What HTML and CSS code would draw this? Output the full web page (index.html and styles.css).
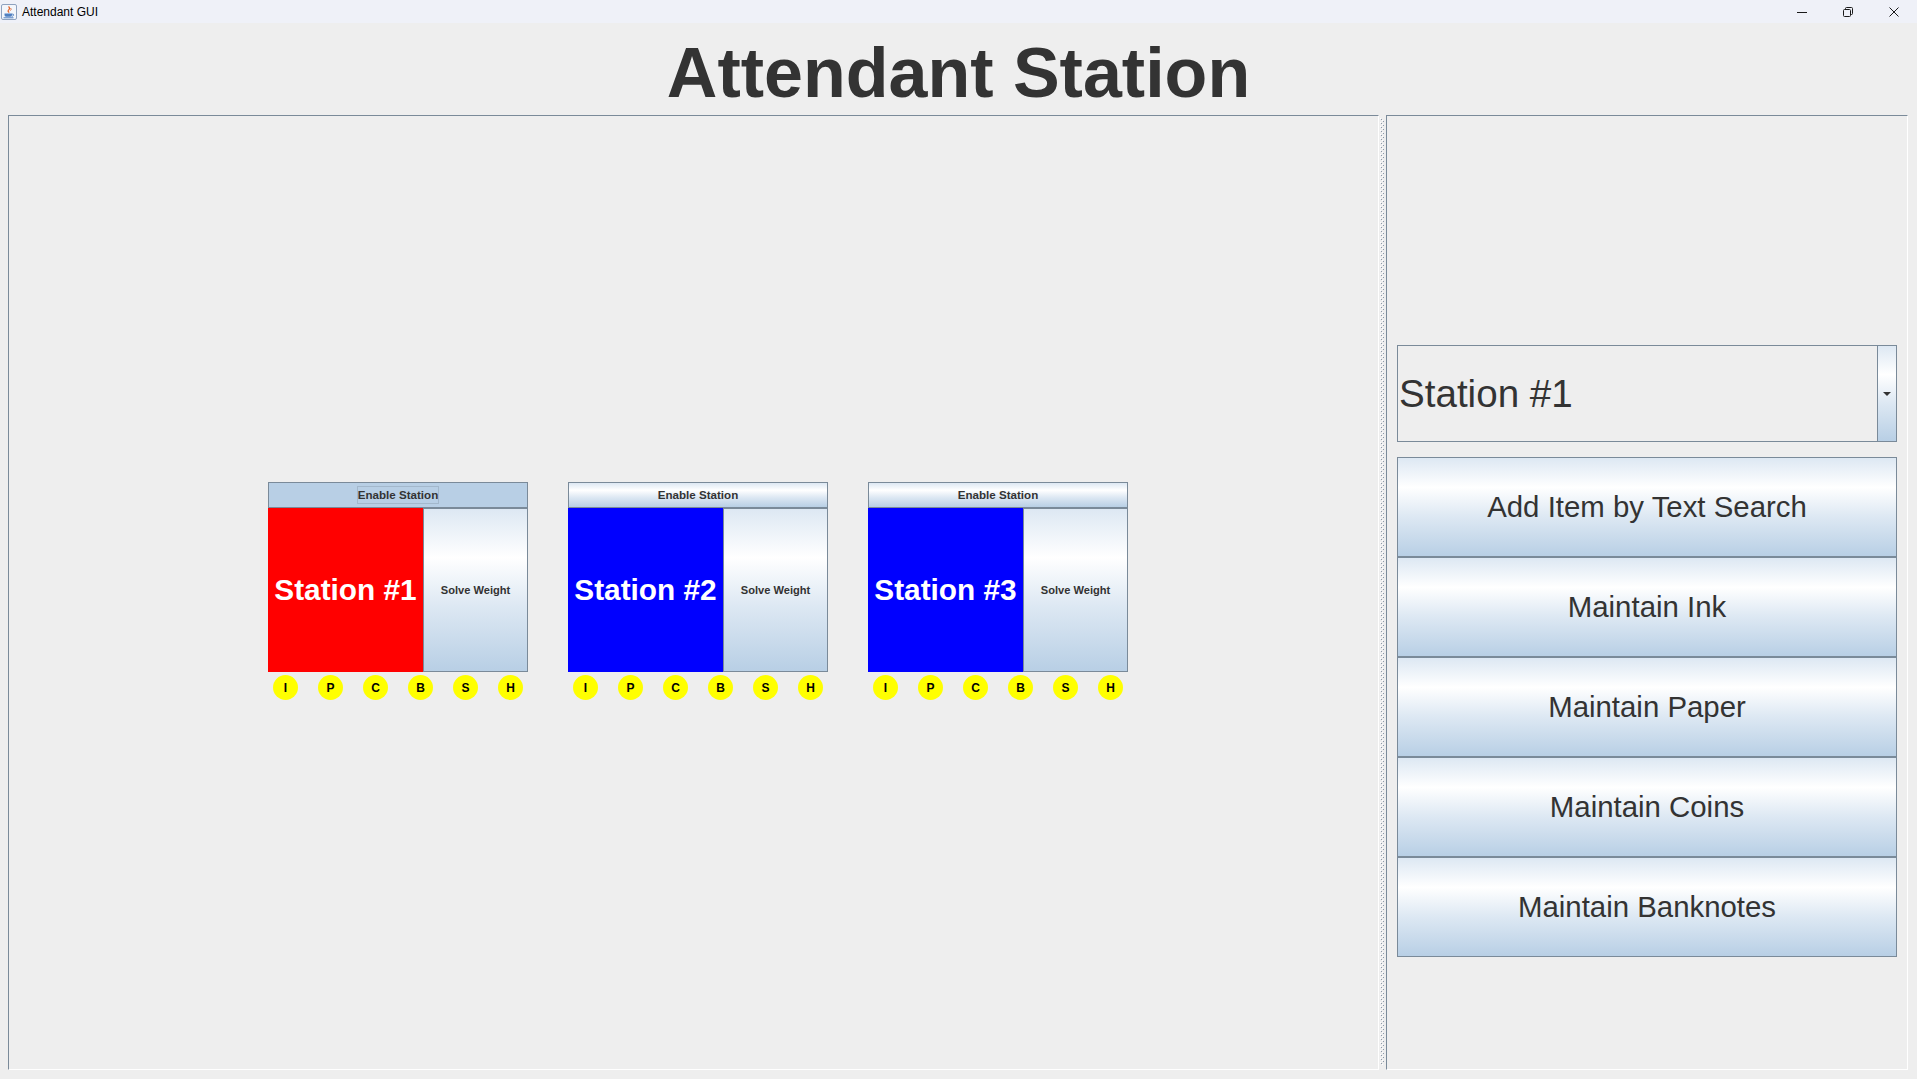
FILE: index.html
```html
<!DOCTYPE html>
<html>
<head>
<meta charset="utf-8">
<title>Attendant GUI</title>
<link rel="stylesheet" href="styles.css">
</head>
<body>
<div class="window">
  <div class="titlebar">
    <div class="tb-left">
      <svg class="app-icon" width="16" height="16" viewBox="0 0 16 16">
        <rect x="0.5" y="0.5" width="15" height="15" rx="1.5" fill="#f3f6fb" stroke="#8ea2bf"/>
        <path d="M7.5 2.5 q2 1.8 0 3.6 q-1.2 1.2 0.8 2.4" fill="none" stroke="#e2632a" stroke-width="1.2"/>
        <path d="M9.6 4 q1.2 1.4 -0.2 2.6" fill="none" stroke="#e2632a" stroke-width="0.9"/>
        <path d="M3.5 9.5 h7.5 v1.6 q0 1.6 -1.6 1.6 h-4.3 q-1.6 0 -1.6 -1.6 z" fill="#4f7fc0"/>
        <path d="M11 10 q2.2 0 1.6 1.4 q-0.4 0.8 -1.8 0.9" fill="none" stroke="#4f7fc0" stroke-width="0.9"/>
        <path d="M2.5 13.8 h10" stroke="#4f7fc0" stroke-width="1"/>
      </svg>
      <span class="tb-title">Attendant GUI</span>
    </div>
    <div class="tb-controls">
      <div class="tb-btn">
        <svg width="10" height="10" viewBox="0 0 10 10"><path d="M0 5.5 H10" stroke="#1a1a1a" stroke-width="1"/></svg>
      </div>
      <div class="tb-btn">
        <svg width="10" height="10" viewBox="0 0 10 10"><rect x="0.5" y="2.5" width="7" height="7" rx="1" fill="none" stroke="#1a1a1a"/><path d="M2.5 2.5 V1.5 a1 1 0 0 1 1 -1 H8.5 a1 1 0 0 1 1 1 V6.5 a1 1 0 0 1 -1 1 H7.5" fill="none" stroke="#1a1a1a"/></svg>
      </div>
      <div class="tb-btn">
        <svg width="10" height="10" viewBox="0 0 10 10"><path d="M0.5 0.5 L9.5 9.5 M9.5 0.5 L0.5 9.5" stroke="#1a1a1a" stroke-width="1"/></svg>
      </div>
    </div>
  </div>

  <div class="header">
    <h1 class="title">Attendant Station</h1>
  </div>

  <div class="split">
    <div class="left-pane">
      <div class="stations">
        <div class="station">
          <div class="enable-btn selected"><span class="focus">Enable Station</span></div>
          <div class="station-body">
            <div class="station-label red">Station #1</div>
            <div class="solve-btn">Solve Weight</div>
          </div>
          <div class="indicators">
            <span class="ind">I</span><span class="ind">P</span><span class="ind">C</span><span class="ind">B</span><span class="ind">S</span><span class="ind">H</span>
          </div>
        </div>
        <div class="station">
          <div class="enable-btn"><span class="plain">Enable Station</span></div>
          <div class="station-body">
            <div class="station-label blue">Station #2</div>
            <div class="solve-btn">Solve Weight</div>
          </div>
          <div class="indicators">
            <span class="ind">I</span><span class="ind">P</span><span class="ind">C</span><span class="ind">B</span><span class="ind">S</span><span class="ind">H</span>
          </div>
        </div>
        <div class="station">
          <div class="enable-btn"><span class="plain">Enable Station</span></div>
          <div class="station-body">
            <div class="station-label blue">Station #3</div>
            <div class="solve-btn">Solve Weight</div>
          </div>
          <div class="indicators">
            <span class="ind">I</span><span class="ind">P</span><span class="ind">C</span><span class="ind">B</span><span class="ind">S</span><span class="ind">H</span>
          </div>
        </div>
      </div>
    </div>

    <div class="divider">
      <svg class="bumps" width="4" height="947">
        <defs>
          <pattern id="bump" width="4" height="4" patternUnits="userSpaceOnUse">
            <rect x="0" y="0" width="1" height="1" fill="#ffffff"/>
            <rect x="1" y="1" width="1" height="1" fill="#8c99a8"/>
            <rect x="2" y="2" width="1" height="1" fill="#ffffff"/>
            <rect x="3" y="3" width="1" height="1" fill="#8c99a8"/>
          </pattern>
        </defs>
        <rect width="4" height="947" fill="url(#bump)"/>
      </svg>
    </div>

    <div class="right-pane">
      <div class="combo">
        <div class="combo-value">Station #1</div>
        <div class="combo-arrow">
          <svg width="8" height="4" viewBox="0 0 8 4"><path d="M0 0 H8 L4 4 Z" fill="#333333"/></svg>
        </div>
      </div>
      <div class="btn-stack">
        <div class="action-btn">Add Item by Text Search</div>
        <div class="action-btn">Maintain Ink</div>
        <div class="action-btn">Maintain Paper</div>
        <div class="action-btn">Maintain Coins</div>
        <div class="action-btn">Maintain Banknotes</div>
      </div>
    </div>
  </div>
</div>
</body>
</html>
```

FILE: styles.css
```css
* {
  box-sizing: border-box;
}

html, body {
  margin: 0;
  padding: 0;
}

body {
  background: #eeeeee;
  font-family: "Liberation Sans", Arial, sans-serif;
  color: #333333;
}

.window {
  width: 1917px;
  height: 1079px;
  display: flex;
  flex-direction: column;
  overflow: hidden;
  background: #eeeeee;
}

/* ---------- title bar ---------- */
.titlebar {
  height: 23px;
  flex: 0 0 23px;
  background: #eff1f8;
  display: flex;
  align-items: center;
  justify-content: space-between;
}

.tb-left {
  display: flex;
  align-items: center;
  padding-left: 1px;
}

.app-icon {
  display: block;
  margin-top: 1px;
}

.tb-title {
  margin-left: 5px;
  font-family: "Liberation Sans", Arial, sans-serif;
  font-size: 12px;
  color: #000000;
}

.tb-controls {
  display: flex;
  height: 23px;
}

.tb-btn {
  width: 46px;
  height: 23px;
  display: flex;
  align-items: center;
  justify-content: center;
}

.tb-btn svg {
  display: block;
}

/* ---------- header ---------- */
.header {
  height: 92px;
  flex: 0 0 92px;
  display: flex;
  justify-content: center;
}

.title {
  margin: 0;
  padding-top: 10px;
  font-size: 70px;
  line-height: 80px;
  font-weight: bold;
  color: #333333;
}

/* ---------- split pane ---------- */
.split {
  display: flex;
  height: 955px;
  flex: 0 0 955px;
  margin-left: 8px;
  width: 1900px;
}

.left-pane {
  width: 1371px;
  height: 955px;
  border-top: 1px solid #7a8a99;
  border-left: 1px solid #7a8a99;
  border-right: 1px solid #ffffff;
  border-bottom: 1px solid #ffffff;
  display: flex;
  align-items: center;
  justify-content: center;
}

.divider {
  width: 7px;
  height: 955px;
  padding: 3px 0 0 1px;
}

.bumps {
  display: block;
}

.right-pane {
  width: 522px;
  height: 955px;
  border-top: 1px solid #7a8a99;
  border-left: 1px solid #7a8a99;
  border-right: 1px solid #ffffff;
  border-bottom: 1px solid #ffffff;
  padding: 229px 10px 0 10px;
  display: flex;
  flex-direction: column;
}

/* ---------- stations ---------- */
.stations {
  display: flex;
  gap: 40px;
  margin-left: 9px;
}

.station {
  width: 260px;
  display: flex;
  flex-direction: column;
}

.enable-btn {
  height: 26px;
  border: 1px solid #7a8a99;
  background: linear-gradient(to bottom, #dde8f3 0%, #ffffff 30%, #dde8f3 60%, #b8cfe5 100%);
  display: flex;
  align-items: center;
  justify-content: center;
  font-size: 11.6px;
  font-weight: bold;
  color: #333333;
}

.enable-btn.selected {
  background: #b8cfe5;
}

.focus {
  display: inline-block;
  height: 16px;
  line-height: 16px;
  outline: 1px solid #a3b8cc;
}

.plain {
  display: inline-block;
  height: 16px;
  line-height: 16px;
}

.station-body {
  display: flex;
  height: 164px;
}

.station-label {
  width: 155px;
  display: flex;
  align-items: center;
  justify-content: center;
  color: #ffffff;
  font-size: 29.8px;
  font-weight: bold;
}

.station-label.red {
  background: #ff0000;
}

.station-label.blue {
  background: #0000ff;
}

.solve-btn {
  width: 105px;
  border: 1px solid #7a8a99;
  background: linear-gradient(to bottom, #dde8f3 0%, #ffffff 30%, #dde8f3 60%, #b8cfe5 100%);
  display: flex;
  align-items: center;
  justify-content: center;
  font-size: 11.1px;
  font-weight: bold;
  color: #333333;
}

.indicators {
  height: 31px;
  display: flex;
  align-items: center;
  justify-content: center;
  gap: 20px;
}

.ind {
  width: 25px;
  height: 25px;
  border-radius: 50%;
  background: #ffff00;
  display: flex;
  align-items: center;
  justify-content: center;
  font-size: 12px;
  font-weight: bold;
  color: #000000;
}

/* ---------- right side ---------- */
.combo {
  height: 97px;
  flex: 0 0 97px;
  border: 1px solid #7a8a99;
  display: flex;
}

.combo-value {
  flex: 1;
  display: flex;
  align-items: center;
  padding-left: 1px;
  font-size: 38.6px;
  color: #333333;
}

.combo-arrow {
  width: 19px;
  border-left: 1px solid #7a8a99;
  background: linear-gradient(to bottom, #dde8f3 0%, #ffffff 30%, #dde8f3 60%, #b8cfe5 100%);
  display: flex;
  align-items: center;
  justify-content: center;
}

.combo-arrow svg {
  display: block;
}

.btn-stack {
  margin-top: 15px;
  display: flex;
  flex-direction: column;
}

.action-btn {
  height: 100px;
  border: 1px solid #7a8a99;
  background: linear-gradient(to bottom, #dde8f3 0%, #ffffff 30%, #dde8f3 60%, #b8cfe5 100%);
  display: flex;
  align-items: center;
  justify-content: center;
  font-size: 29.4px;
  color: #333333;
}
```
